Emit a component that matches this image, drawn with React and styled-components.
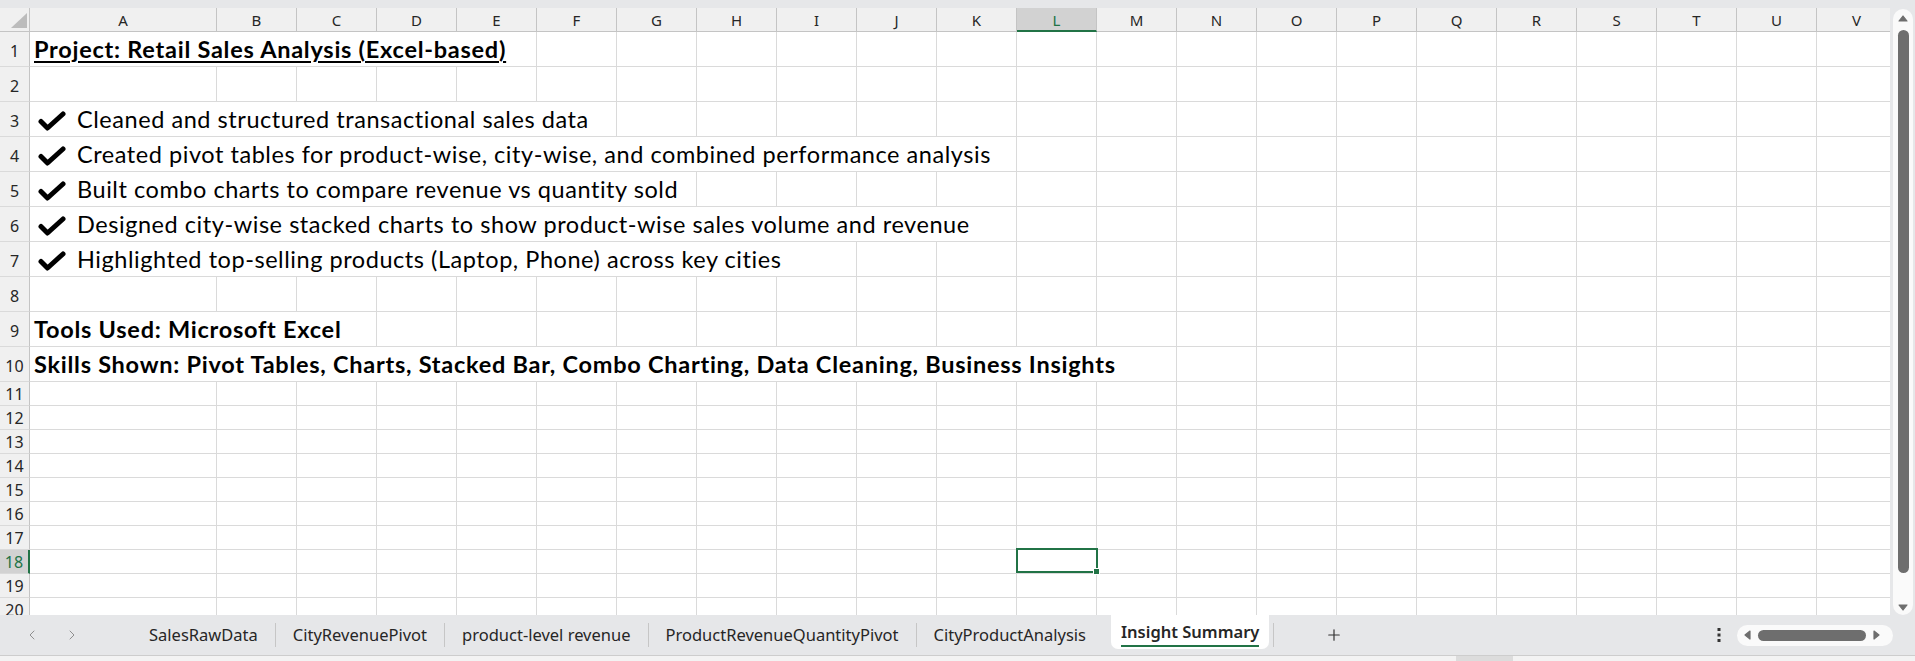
import React from 'react';
import styled, { createGlobalStyle } from 'styled-components';
import { ChevronLeft, ChevronRight, Plus } from 'lucide-react';

const GREEN = '#217346';
const GRID = '#dadada';
const HEAD_LINE = '#c4c4c4';
const BAR = '#e6e7e9';
const CELL_FONT = `Lato, "Liberation Sans", sans-serif`;
const UI_FONT = `"Noto Sans", "Open Sans", sans-serif`;

const COLS = 'ABCDEFGHIJKLMNOPQRSTUV'.split('');
const colWidth = (c) => (c === 'A' ? 187 : 80);
const SEL_COL = 'L';
const SEL_ROW = 18;

const ROWS = [
  { n: 1, h: 35, kind: 'title', text: 'Project: Retail Sales Analysis (Excel-based)' },
  { n: 2, h: 35 },
  { n: 3, h: 35, kind: 'check', text: 'Cleaned and structured transactional sales data' },
  { n: 4, h: 35, kind: 'check', text: 'Created pivot tables for product-wise, city-wise, and combined performance analysis' },
  { n: 5, h: 35, kind: 'check', text: 'Built combo charts to compare revenue vs quantity sold' },
  { n: 6, h: 35, kind: 'check', text: 'Designed city-wise stacked charts to show product-wise sales volume and revenue' },
  { n: 7, h: 35, kind: 'check', text: 'Highlighted top-selling products (Laptop, Phone) across key cities' },
  { n: 8, h: 35 },
  { n: 9, h: 35, kind: 'bold', text: 'Tools Used: Microsoft Excel' },
  { n: 10, h: 35, kind: 'bold', text: 'Skills Shown: Pivot Tables, Charts, Stacked Bar, Combo Charting, Data Cleaning, Business Insights' },
  ...Array.from({ length: 10 }, (_, i) => ({ n: 11 + i, h: 24 })),
];

const TABS = [
  'SalesRawData',
  'CityRevenuePivot',
  'product-level revenue',
  'ProductRevenueQuantityPivot',
  'CityProductAnalysis',
];

const Global = createGlobalStyle`
  html, body { margin: 0; padding: 0; background: #fff; overflow: hidden; }
  * { box-sizing: border-box; }
`;

const Window = styled.div`
  width: 1915px;
  height: 661px;
  display: flex;
  flex-direction: column;
  background: ${BAR};
  overflow: hidden;
`;

const TopStrip = styled.div`
  height: 8px;
  flex-shrink: 0;
  background: ${BAR};
`;

const Main = styled.div`
  display: flex;
  height: 607px;
  flex-shrink: 0;
`;

const Sheet = styled.div`
  flex: 1;
  min-width: 0;
  overflow: hidden;
  background: #fff;
  display: flex;
  flex-direction: column;
`;

const HeaderRow = styled.div`
  display: flex;
  height: 24px;
  flex-shrink: 0;
`;

const Corner = styled.div`
  width: 30px;
  flex-shrink: 0;
  background: #f0f0f0;
  border-right: 1px solid ${HEAD_LINE};
  border-bottom: 1px solid ${HEAD_LINE};
  display: flex;
  justify-content: flex-end;
  align-items: flex-end;
  padding: 0 2px 3px 0;
`;

const ColHead = styled.div`
  width: ${(p) => p.$w}px;
  flex-shrink: 0;
  display: flex;
  align-items: center;
  justify-content: center;
  font-family: ${UI_FONT};
  font-size: 15px;
  color: ${(p) => (p.$sel ? GREEN : '#262626')};
  background: ${(p) => (p.$sel ? '#d2d2d2' : '#f0f0f0')};
  border-right: 1px solid ${HEAD_LINE};
  border-bottom: ${(p) => (p.$sel ? `2px solid ${GREEN}` : `1px solid ${HEAD_LINE}`)};
  padding-top: ${(p) => (p.$sel ? '1px' : '0')};
`;

const GridRow = styled.div`
  display: flex;
  height: ${(p) => p.$h}px;
  flex-shrink: 0;
`;

const RowHead = styled.div`
  width: 30px;
  flex-shrink: 0;
  display: flex;
  align-items: ${(p) => (p.$tall ? 'flex-end' : 'center')};
  justify-content: center;
  padding-bottom: ${(p) => (p.$tall ? '5px' : '0')};
  font-family: ${UI_FONT};
  font-size: 16px;
  line-height: 20px;
  color: ${(p) => (p.$sel ? GREEN : '#262626')};
  background: ${(p) => (p.$sel ? '#d2d2d2' : '#f0f0f0')};
  border-right: ${(p) => (p.$sel ? `2px solid ${GREEN}` : `1px solid ${HEAD_LINE}`)};
  border-bottom: 1px solid ${GRID};
`;

const Cell = styled.div`
  width: ${(p) => p.$w}px;
  flex-shrink: 0;
  position: relative;
  border-right: 1px solid ${GRID};
  border-bottom: 1px solid ${GRID};
`;

const CellText = styled.div`
  position: relative;
  z-index: 1;
  height: 100%;
  width: max-content;
  display: flex;
  align-items: flex-end;
  gap: 11px;
  padding: 0 6px 3px 4px;
  background: #fff;
  white-space: nowrap;
  font-family: ${CELL_FONT};
  font-size: 23.5px;
  letter-spacing: ${(p) => (p.$bold ? '0.74px' : '0.55px')};
  line-height: 27px;
  color: #000;
  font-weight: ${(p) => (p.$bold ? 700 : 400)};
  text-decoration: ${(p) => (p.$underline ? 'underline' : 'none')};
  text-decoration-thickness: 2px;
  text-underline-offset: 3px;
`;

const CheckIcon = styled.svg`
  width: 28px;
  height: 20px;
  margin: 0 0 2px 4px;
  flex-shrink: 0;
`;

const Selection = styled.div`
  position: absolute;
  left: -1px;
  top: -2px;
  right: -2px;
  bottom: 0;
  border: 2px solid ${GREEN};
  z-index: 2;
`;

const FillHandle = styled.div`
  position: absolute;
  right: -4px;
  bottom: -4px;
  width: 7px;
  height: 7px;
  background: ${GREEN};
  border: 1px solid #fff;
`;

const VScroll = styled.div`
  width: 25px;
  flex-shrink: 0;
  background: ${BAR};
  padding: 1px 2px 0 3px;
  display: flex;
`;

const VTrack = styled.div`
  flex: 1;
  background: #fafafa;
  border-radius: 10px;
  display: flex;
  flex-direction: column;
  align-items: center;
  padding: 6px 0 4px;
`;

const VThumb = styled.div`
  width: 11px;
  height: 543px;
  margin-top: 8px;
  border-radius: 6px;
  background: #6e6e6e;
`;

const ArrowSlot = styled.div`
  display: block;
  flex-shrink: 0;
  line-height: 0;
  margin-top: ${(p) => (p.$push ? 'auto' : '0')};
`;

const TabBar = styled.div`
  height: 40px;
  flex-shrink: 0;
  display: flex;
  align-items: center;
  background: ${BAR};
  font-family: ${UI_FONT};
`;

const NavGroup = styled.div`
  width: 132px;
  flex-shrink: 0;
  display: flex;
  align-items: center;
  gap: 24px;
  padding-left: 24px;
  color: #8f8f8f;
`;

const Tab = styled.div`
  padding: 0 17px;
  font-size: 16.5px;
  color: #262626;
  white-space: nowrap;
  line-height: 22px;
`;

const Sep = styled.div`
  width: 1px;
  height: 24px;
  background: #c6c6c6;
  flex-shrink: 0;
`;

const ActiveTab = styled.div`
  align-self: flex-start;
  margin-left: 8px;
  margin-right: 4px;
  padding: 6px 10px 2px;
  background: #fff;
  border-radius: 0 0 7px 7px;
`;

const ActiveLabel = styled.div`
  font-size: 16.5px;
  font-weight: 600;
  color: #262626;
  line-height: 22px;
  padding-bottom: 2px;
  border-bottom: 2px solid ${GREEN};
  white-space: nowrap;
`;

const AddButton = styled.div`
  margin-left: 51px;
  display: flex;
  align-items: center;
  color: #333;
`;

const Spacer = styled.div`
  flex: 1;
`;

const RightGroup = styled.div`
  display: flex;
  align-items: center;
  gap: 16px;
  margin-right: 22px;
`;

const HTrack = styled.div`
  width: 156px;
  height: 21px;
  border-radius: 11px;
  background: #fafafa;
  display: flex;
  align-items: center;
  padding: 0 7px;
  gap: 7px;
`;

const HThumb = styled.div`
  width: 108px;
  height: 11px;
  border-radius: 6px;
  background: #6e6e6e;
`;

const BottomStrip = styled.div`
  height: 6px;
  flex-shrink: 0;
  background: #f3f3f3;
  border-top: 1px solid #cdcdcd;
  padding-left: 1456px;
`;

const StatusBlock = styled.div`
  width: 57px;
  height: 5px;
  background: #dcdcdc;
`;

function Check() {
  return (
    <CheckIcon viewBox="0 0 28 20">
      <path
        d="M3 10.5 L9.5 17 L25 3"
        fill="none"
        stroke="#000"
        strokeWidth="5"
        strokeLinecap="round"
        strokeLinejoin="round"
      />
    </CheckIcon>
  );
}

function CellContent({ row }) {
  if (!row.kind) return null;
  if (row.kind === 'check') {
    return (
      <CellText>
        <Check />
        <span>{row.text}</span>
      </CellText>
    );
  }
  return (
    <CellText $bold $underline={row.kind === 'title'}>
      {row.text}
    </CellText>
  );
}

function Tri({ dir }) {
  const pts = {
    up: '1,6 5,1 9,6',
    down: '1,1 5,6 9,1',
    left: '6,1 1,5 6,9',
    right: '1,1 6,5 1,9',
  }[dir];
  const vert = dir === 'up' || dir === 'down';
  return (
    <svg width={vert ? 10 : 7} height={vert ? 7 : 10} viewBox={vert ? '0 0 10 7' : '0 0 7 10'}>
      <polygon points={pts} fill="#6e6e6e" stroke="#6e6e6e" strokeWidth="1.2" strokeLinejoin="round" />
    </svg>
  );
}

export default function App() {
  return (
    <Window>
      <Global />
      <TopStrip />
      <Main>
        <Sheet>
          <HeaderRow>
            <Corner>
              <svg width="16" height="15" viewBox="0 0 16 15">
                <polygon points="16,0 16,15 0,15" fill="#bcbcbc" />
              </svg>
            </Corner>
            {COLS.map((c) => (
              <ColHead key={c} $w={colWidth(c)} $sel={c === SEL_COL}>
                {c}
              </ColHead>
            ))}
          </HeaderRow>
          {ROWS.map((row) => (
            <GridRow key={row.n} $h={row.h}>
              <RowHead $tall={row.h > 30} $sel={row.n === SEL_ROW}>
                {row.n}
              </RowHead>
              {COLS.map((c) => (
                <Cell key={c} $w={colWidth(c)}>
                  {c === 'A' && <CellContent row={row} />}
                  {c === SEL_COL && row.n === SEL_ROW && (
                    <Selection>
                      <FillHandle />
                    </Selection>
                  )}
                </Cell>
              ))}
            </GridRow>
          ))}
        </Sheet>
        <VScroll>
          <VTrack>
            <ArrowSlot>
              <Tri dir="up" />
            </ArrowSlot>
            <VThumb />
            <ArrowSlot $push>
              <Tri dir="down" />
            </ArrowSlot>
          </VTrack>
        </VScroll>
      </Main>
      <TabBar>
        <NavGroup>
          <ChevronLeft size={16} strokeWidth={1.5} />
          <ChevronRight size={16} strokeWidth={1.5} />
        </NavGroup>
        {TABS.map((t, i) => (
          <React.Fragment key={t}>
            {i > 0 && <Sep />}
            <Tab>{t}</Tab>
          </React.Fragment>
        ))}
        <ActiveTab>
          <ActiveLabel>Insight Summary</ActiveLabel>
        </ActiveTab>
        <Sep />
        <AddButton>
          <Plus size={18} strokeWidth={1.6} />
        </AddButton>
        <Spacer />
        <RightGroup>
          <svg width="4" height="14" viewBox="0 0 4 14">
            <rect x="0.5" y="0" width="3" height="3" fill="#333" />
            <rect x="0.5" y="5.5" width="3" height="3" fill="#333" />
            <rect x="0.5" y="11" width="3" height="3" fill="#333" />
          </svg>
          <HTrack>
            <Tri dir="left" />
            <HThumb />
            <Tri dir="right" />
          </HTrack>
        </RightGroup>
      </TabBar>
      <BottomStrip>
        <StatusBlock />
      </BottomStrip>
    </Window>
  );
}
